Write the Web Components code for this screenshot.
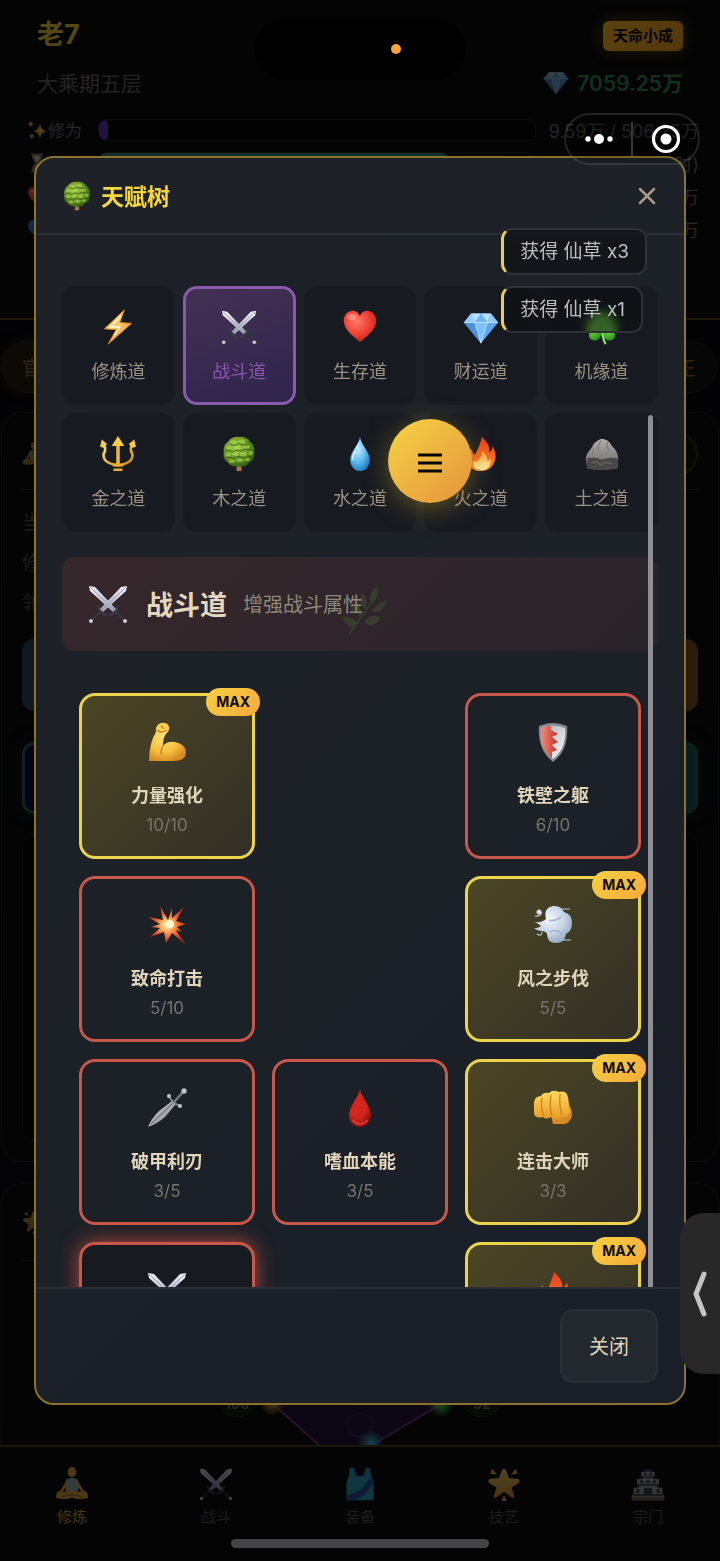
<!DOCTYPE html>
<html lang="zh-CN">
<head>
<meta charset="utf-8">
<meta name="viewport" content="width=device-width, initial-scale=1">
<title>天赋树</title>
<style>
    html, body {
        margin: 0;
        height: 100%;
        background: #040406;
        font-family: Inter, "Noto Sans CJK SC", sans-serif;
        overflow: hidden;
    }
</style>
</head>
<body>
<game-page>
    <game-header slot="header" name="老7" level="大乘期五层" rank="天命小成" coins="7059.25万">
        <stat-row icon="sparkles" label="修为" value="9.59万 / 506.25万" color="#24123f" fill="2"></stat-row>
        <stat-row icon="hourglass" value="时)" color="#12302a" fill="80"></stat-row>
        <stat-row icon="heart" value="万" color="#30100e" fill="100"></stat-row>
        <stat-row icon="blueheart" value="万" color="#0c1c36" fill="100"></stat-row>
    </game-header>
    <home-content></home-content>
    <bottom-nav slot="nav">
        <nav-item icon="lotus" active>修炼</nav-item>
        <nav-item icon="swords">战斗</nav-item>
        <nav-item icon="vest">装备</nav-item>
        <nav-item icon="star">技艺</nav-item>
        <nav-item icon="castle">宗门</nav-item>
    </bottom-nav>
</game-page>

<talent-modal heading="天赋树" icon="tree">
    <path-tabs>
        <path-tile icon="bolt">修炼道</path-tile>
        <path-tile icon="swords" selected>战斗道</path-tile>
        <path-tile icon="heart">生存道</path-tile>
        <path-tile icon="gem">财运道</path-tile>
        <path-tile icon="clover">机缘道</path-tile>
        <path-tile icon="trident">金之道</path-tile>
        <path-tile icon="tree">木之道</path-tile>
        <path-tile icon="drop">水之道</path-tile>
        <path-tile icon="fire">火之道</path-tile>
        <path-tile icon="rock">土之道</path-tile>
    </path-tabs>
    <path-banner icon="swords" heading="战斗道">增强战斗属性</path-banner>
    <talent-grid>
        <talent-card col="1" icon="arm" level="10/10" max>力量强化</talent-card>
        <talent-card col="3" icon="shield" level="6/10">铁壁之躯</talent-card>
        <talent-card col="1" icon="boom" level="5/10">致命打击</talent-card>
        <talent-card col="3" icon="wind" level="5/5" max>风之步伐</talent-card>
        <talent-card col="1" icon="dagger" level="3/5">破甲利刃</talent-card>
        <talent-card col="2" icon="blood" level="3/5">嗜血本能</talent-card>
        <talent-card col="3" icon="fist" level="3/3" max>连击大师</talent-card>
        <talent-card col="1" icon="swords" ready></talent-card>
        <talent-card col="3" icon="fire" max></talent-card>
    </talent-grid>
    <button-secondary slot="footer">关闭</button-secondary>
</talent-modal>

<toast-list>
    <toast-item>获得 仙草 x3</toast-item>
    <toast-item>获得 仙草 x1</toast-item>
</toast-list>
<float-menu></float-menu>
<phone-chrome></phone-chrome>

<script>
/** Icon drawings, all on a 40x40 box */
const grad = (id, a, b, dir = 'x1="0" y1="0" x2="1" y2="1"') =>
    `<linearGradient id="${id}" ${dir}><stop offset="0" stop-color="${a}"/><stop offset="1" stop-color="${b}"/></linearGradient>`;
const radial = (id, a, b, c) =>
    `<radialGradient id="${id}" cx=".4" cy=".35" r=".7"><stop offset="0" stop-color="${a}"/><stop offset=".6" stop-color="${b}"/><stop offset="1" stop-color="${c}"/></radialGradient>`;

const heartPath = 'M20 37C14 31 2 24 2 13C2 6 7 2 12 2C16 2 19 5 20 8C21 5 24 2 28 2C33 2 38 6 38 13C38 24 26 31 20 37Z';
const dropPath = 'M20 1C21 9 31 18 31 27A11 12 0 0 1 9 27C9 18 19 9 20 1Z';
const oneSword = `
    <path d="M26 26L36 36" stroke="#33363d" stroke-width="2.200"/>
    <path d="M21 31Q28 31 30 22" stroke="#3b3e46" stroke-width="2" fill="none"/>
    <path d="M1 2L7 3L28 25L25 28L2 7Z" fill="url(#a)"/>
    <path d="M2 3L26 26" stroke="#858a9c" stroke-width=".8"/>
    <circle cx="37" cy="37" r="2" fill="#c9ccd4"/>`;

const ICONS = {
    bolt: `<defs>${grad('a', '#fff3a8', '#f2931d')}</defs>
        <path d="M27 1L5 22L18 23L9 39L35 16L22 15Z" fill="url(#a)" stroke="#e18a1b" stroke-width="1"/>
        <path d="M23 8L12 20L22 20L16 29" stroke="#fffbe0" stroke-width="1.500" fill="none"/>`,
    swords: `<defs>${grad('a', '#f4f6ff', '#9a9eb0')}</defs>
        ${oneSword}<g transform="matrix(-1 0 0 1 40 0)">${oneSword}</g>`,
    heart: `<defs>${radial('a', '#ff7b6d', '#ee3d30', '#b9201c')}</defs><path d="${heartPath}" fill="url(#a)"/>
        <ellipse cx="11" cy="9" rx="5" ry="3.500" fill="#ffb5a8" opacity=".5"/>`,
    blueheart: `<path d="${heartPath}" fill="#2e77e8"/>`,
    gem: `<path d="M9 5H31L39 15L20 38L1 15Z" fill="#5ba7ee"/>
        <path d="M9 5L13 15L1 15Z M31 5L27 15H39Z" fill="#8fcbfa"/>
        <path d="M9 5H20L13 15Z M31 5H20L27 15Z" fill="#b7e1ff"/>
        <path d="M20 5L27 15H13Z" fill="#6cb5f4"/>
        <path d="M13 15H27L20 38Z" fill="#7fc1f8"/>
        <path d="M1 15H13L20 38Z" fill="#4791dd"/>
        <path d="M1 15H39M13 15L20 38L27 15" stroke="#d6efff" stroke-width=".8" fill="none"/>`,
    clover: `<defs>${radial('a', '#8fe05b', '#4db62f', '#2b8420')}</defs>
        <g fill="url(#a)"><path d="M20 20C6 20 5 3 13 3Q19 2 20 8Q21 2 28 3C35 4 33 20 20 20Z"/>
        <path d="M20 20C13 7 0 13 2 20Q1 25 6 26Q4 34 11 35C18 36 21 27 20 20Z"/>
        <path d="M20 20C27 7 40 13 38 20Q39 25 34 26Q36 34 29 35C22 36 19 27 20 20Z"/></g>
        <path d="M20 20Q20 32 24 39" stroke="#8fe06a" stroke-width="2.500" fill="none"/>`,
    tree: `<defs>${radial('a', '#a6cf48', '#628f25', '#31570f')}</defs>
        <path d="M18 30H22L23 39H17Z" fill="#a8794a"/>
        <path d="M20 1Q28 0 32 6Q38 10 37 18Q38 26 31 30Q27 35 20 34Q12 35 8 30Q2 26 3 18Q2 10 8 6Q12 0 20 1Z" fill="url(#a)"/>
        <g fill="#a9d64c" opacity=".6"><ellipse cx="14" cy="7" rx="4" ry="2.500"/><ellipse cx="23" cy="6" rx="4" ry="2.500"/>
        <ellipse cx="9" cy="13" rx="3.500" ry="2.500"/><ellipse cx="18" cy="13" rx="4" ry="2.500"/><ellipse cx="28" cy="12" rx="4" ry="2.500"/>
        <ellipse cx="8" cy="21" rx="3" ry="2.500"/><ellipse cx="16" cy="20" rx="3.500" ry="2.500"/><ellipse cx="25" cy="20" rx="4" ry="2.500"/>
        <ellipse cx="33" cy="19" rx="2.500" ry="2.500"/><ellipse cx="12" cy="28" rx="3.500" ry="2"/><ellipse cx="21" cy="27" rx="4" ry="2"/><ellipse cx="29" cy="26" rx="3" ry="2"/></g>
        <path d="M5 17Q10 14 13 18Q18 14 22 17Q28 13 34 16M5 24Q10 22 14 25Q20 21 26 25Q30 22 35 23M10 9Q16 12 20 8Q26 12 31 9" stroke="#36590f" stroke-width="1" fill="none"/>`,
    trident: `<defs>${grad('a', '#ffe072', '#c98a1b')}</defs>
        <g stroke="url(#a)" stroke-width="3" fill="none" stroke-linecap="round">
        <path d="M3 8Q8 14 4 20Q3 30 18 32M37 8Q32 14 36 20Q37 30 22 32"/></g>
        <path d="M18 8H22V34H18Z" fill="#e9b640"/>
        <path d="M20 0L27 11H13Z M0 12L2 4L8 9L4 13Z M40 12L38 4L32 9L36 13Z" fill="#f8ca4a"/>
        <path d="M14 31H26V34H14Z M15 36H25V39H15Z" fill="#e7ab36"/>`,
    drop: `<defs>${radial('a', '#c7efff', '#58b6ee', '#1d77c4')}</defs><path d="${dropPath}" fill="url(#a)"/>
        <path d="M15 17Q11 22 12 27" stroke="#fff" stroke-width="2" fill="none" opacity=".7"/>`,
    blood: `<defs>${radial('a', '#d9251e', '#cf261c', '#87100e')}</defs><path d="${dropPath}" fill="url(#a)"/>
        <path d="M12 32Q20 40 28 32" stroke="#ff4c42" stroke-width="1.500" fill="none" opacity=".7"/>`,
    fire: `<defs>${grad('a', '#e93c21', '#ff8a24', 'x1="0" y1="0" x2="0" y2="1"')}${grad('b', '#ff9b2a', '#fff6b0', 'x1="0" y1="0" x2="0" y2="1"')}</defs>
        <path d="M21 1Q31 10 29 18Q33 16 33 11Q38 20 35 29Q31 39 20 39Q7 39 5 27Q4 19 10 14Q10 19 13 21Q18 13 21 1Z" fill="url(#a)"/>
        <path d="M21 16Q28 23 27 28Q30 27 31 25Q31 38 20 38Q10 37 11 28Q15 29 17 27Q21 23 21 16Z" fill="url(#b)"/>`,
    rock: `<defs>${grad('a', '#b0aeaa', '#666563', 'x1="0" y1="0" x2="0" y2="1"')}</defs>
        <path d="M2 26Q2 20 8 14Q11 6 19 3Q27 3 31 11Q38 17 38 26L37 36Q20 39 4 36Z" fill="url(#a)"/>
        <path d="M3 25Q12 23 20 26Q30 23 38 25L37 36Q20 39 4 36Z" fill="#494846"/>
        <path d="M19 5Q15 11 16 17M25 6Q25 12 28 17M11 14L9 20" stroke="#7e7c78" stroke-width="1.500" fill="none"/>
        <path d="M9 30L14 28L18 32L25 29L31 31" stroke="#62605c" stroke-width="2" fill="none"/>`,
    arm: `<defs>${radial('a', '#ffe27a', '#f7c03f', '#d38a22')}</defs>
        <path d="M9 10Q8 3 14 1Q21 0 22 5Q23 9 19 12Q16 15 16 24Q20 19 28 20Q39 22 39 31Q38 39 27 39H2Q2 21 9 10Z" fill="url(#a)"/>
        <path d="M10 8Q14 12 20 8M14 4L17 7M16 24Q13 29 15 33" stroke="#c27d20" stroke-width="1.300" fill="none"/>`,
    shield: `<defs>${grad('a', '#f68a7d', '#be3127', 'x1="0" y1="0" x2="1" y2="0"')}${grad('b', '#aaaeb5', '#fafafa')}</defs>
        <path d="M6 4Q20 -2 34 4Q36 28 20 40Q4 28 6 4Z" fill="#858a91"/>
        <path d="M8 6Q20 1 32 6Q34 26 20 37Q6 26 8 6Z" fill="url(#b)"/>
        <path d="M8 6Q14 4 18 4V8L25 12L19 15L25 20L19 23L24 28L19 30V36Q6 26 8 6Z" fill="url(#a)"/>`,
    boom: `<defs><radialGradient id="a"><stop offset="0" stop-color="#fffce0"/><stop offset=".25" stop-color="#ffc46b"/><stop offset=".6" stop-color="#f06a35"/><stop offset="1" stop-color="#b92c1c"/></radialGradient></defs>
        <path d="M21 15L25 3L25 13L37 2L29 16L39 19L30 22L35 27L29 25L38 39L25 28L19 38L17 27L3 32L13 23L4 22L13 19L1 12L16 15L13 1Z" fill="url(#a)"/>
        <circle cx="23" cy="19" r="4" fill="#fff6cf"/>`,
    wind: `<defs>${radial('a', '#f2f7fe', '#c3d1e2', '#93a6bf')}</defs>
        <path d="M1 17Q8 18 13 14Q10 3 20 1Q28 0 31 7Q39 9 39 18Q39 26 33 29Q32 38 23 38Q14 38 14 29Q13 26 8 26Q4 26 1 23Q6 23 8 21Q5 18 1 17Z" fill="url(#a)"/>
        <path d="M16 15Q22 17 28 12M17 27Q23 23 29 29" stroke="#9fb1c8" stroke-width="1.500" fill="none"/>
        <circle cx="6" cy="7" r="2.500" fill="#d8e2ee"/><path d="M2 11Q7 12 9 7M4 29Q9 32 9 27M27 4H37M29 35H38" stroke="#b9c8d8" stroke-width="1.200" fill="none"/>`,
    dagger: `<defs>${grad('a', '#d2d4d8', '#7d8085')}</defs>
        <path d="M1 39Q4 31 12 23L25 13L29 16L18 29Q10 36 1 39Z" fill="url(#a)"/><path d="M4 36L27 14" stroke="#54575d" stroke-width="1"/>
        <path d="M22 8Q24 14 33 18" stroke="#8b8e93" stroke-width="1.800" fill="none"/>
        <path d="M27 14L36 4" stroke="#777a80" stroke-width="2.600"/>
        <g fill="#bfc2c7"><circle cx="37" cy="3" r="2.700"/><circle cx="22" cy="8" r="2.100"/><circle cx="33" cy="18" r="2.100"/></g>`,
    fist: `<defs>${grad('a', '#ffd95c', '#e79c27', 'x1="0" y1="0" x2="0" y2="1"')}</defs>
        <path d="M30 12Q40 18 39 28Q36 36 31 36H20L18 28Z" fill="#d68a22"/>
        <path d="M1 14Q2 8 8 8Q10 4 16 5Q20 1 26 4Q33 2 35 9L37 24Q35 30 29 29Q23 33 18 29Q13 32 10 29Q3 31 1 26Z" fill="url(#a)"/>
        <path d="M9 10Q7 19 11 28M18 7Q16 19 19 28M27 6Q26 18 29 27" stroke="#cc8420" stroke-width="1.300" fill="none"/>`,
    herb: `<g fill="#4d8a3c"><path d="M31 1Q34 9 27 15Q23 8 31 1Z M39 13Q33 12 27 21Q35 24 39 13Z M34 26Q25 22 21 30Q29 36 34 26Z M19 6Q25 12 22 19Q16 15 19 6Z M9 14Q19 14 19 24Q11 24 9 14Z M3 26Q13 24 15 32Q8 36 3 26Z"/></g>
        <path d="M29 10Q21 23 9 39" stroke="#4d8a3c" stroke-width="1.500" fill="none"/>`,
    lotus: `<g fill="#f5b73c"><ellipse cx="20" cy="6" rx="5" ry="6"/><path d="M13 16Q20 10 27 16L33 27L39 31L35 33L27 24V29Q39 28 39 36Q30 40 20 36Q10 40 1 36Q1 28 13 29V24L5 33L1 31L7 27Z"/></g>
        <path d="M13 15Q20 11 27 15L26 28H14Z" fill="#9fc0c8"/><path d="M8 36Q20 29 32 36" stroke="#a86f20" stroke-width="1.500" fill="none"/>`,
    vest: `<path d="M8 1H13Q14 11 20 11Q26 11 27 1H32Q32 12 36 17V39H4V17Q8 12 8 1Z" fill="#2aa6c6"/><path d="M4 33Q22 31 31 13L36 18Q27 36 12 39H4Z" fill="#2b4fa6"/><path d="M13 1Q14 11 20 11Q26 11 27 1" stroke="#2b4fa6" stroke-width="2" fill="none"/>`,
    star: `<defs>${grad('a', '#ffdd66', '#ea9a25', 'x1="0" y1="0" x2="0" y2="1"')}</defs>
        <path d="M20 2Q22 2 23 5L26 13L37 14Q40 16 37 19L29 24L32 34Q32 37 29 36L20 29L11 36Q8 37 8 34L11 24L3 19Q0 16 3 14L14 13L17 5Q18 2 20 2Z" fill="url(#a)"/>
        <path d="M6 2L12 9L4 8Z M34 2L28 9L36 8Z M20 33L23 40H17Z" fill="#f5b63c"/>`,
    castle: `<path d="M13 6Q20 -1 27 6Z" fill="#40516a"/><path d="M12 6H28V11H26V14H33V20H31V24H37V33H39V39H1V33H3V24H9V20H7V14H14V11H12Z" fill="#a5a7a8"/>
        <path d="M12 12H28M7 21H33M3 33H37" stroke="#45484b" stroke-width="2"/><path d="M15 7H18V10H15ZM22 7H25V10H22ZM11 16H14V19H11ZM18 16H22V19H18ZM26 16H29V19H26ZM6 26H10V31H6ZM30 26H34V31H30ZM15 33V26Q20 23 25 26V33Z" fill="#3a3c40"/><path d="M1 37H39" stroke="#76654b" stroke-width="4"/>`,
    sparkles: `<g fill="#f5c444"><path d="M26 7Q27 20 39 22Q27 24 26 38Q24 24 13 22Q24 20 26 7Z M8 1Q8 7 13 8Q8 9 8 15Q7 9 2 8Q7 7 8 1Z M10 26Q10 31 15 32Q10 33 10 39Q9 33 4 32Q9 31 10 26Z"/></g>`,
    hourglass: `<path d="M8 1H32V5H30Q30 14 23 20Q30 26 30 35H32V39H8V35H10Q10 26 17 20Q10 14 10 5H8Z" fill="#98764f"/><path d="M14 6H26Q26 14 20 18Q14 14 14 6Z M20 23Q25 27 26 34H14Q15 27 20 23Z" fill="#d9d2bd"/>`
};

/** Base class: each element gives its styles and its markup */
class GameElement extends HTMLElement {
    constructor() {
        super();
        this.attachShadow({ mode: 'open' });
    }

    attr(name) {
        return this.getAttribute(name) || '';
    }

    getStyle() { return ''; }
    getTemplate() { return '<slot></slot>'; }

    connectedCallback() {
        const template = document.createElement('template');
        template.innerHTML = `<style>*{box-sizing:border-box} button{font:inherit;cursor:pointer}${this.getStyle()}</style>${this.getTemplate()}`;
        this.shadowRoot.replaceChildren(template.content.cloneNode(true));
    }
}

class GameIcon extends GameElement {
    getStyle() {
        return `:host{display:block;flex:none;width:36px;height:36px} svg{display:block;width:100%;height:100%}`;
    }
    getTemplate() {
        return `<svg viewBox="0 0 40 40" aria-hidden="true">${ICONS[this.attr('name')] || ''}</svg>`;
    }
}

/* ---------- page behind the dialog ---------- */

class GamePage extends GameElement {
    getStyle() {
        return `
            :host{display:flex;flex-direction:column;height:100vh;color:#23221f;background:linear-gradient(180deg,#040406,#020203 50%,#050507)}
            main{flex:1;min-height:0;overflow:hidden}`;
    }
    getTemplate() {
        return `<slot name="header"></slot><main><slot></slot></main><slot name="nav"></slot>`;
    }
}

class GameHeader extends GameElement {
    getStyle() {
        return `
            :host{display:block;padding:13px 21px 73px 27px;border-bottom:2px solid #1e1708;background:#040405}
            .row{display:flex;align-items:center;justify-content:space-between;height:46px;margin:0 16px 0 10px}
            .name{font-size:27px;font-weight:700;line-height:44px;padding-bottom:2px;color:#544714}
            .rank{padding:0 10px;border-radius:6px;background:linear-gradient(135deg,#5a430f,#54360b);font-size:15px;line-height:30px;font-weight:700;color:#050403;box-shadow:0 0 14px #261e08}
            .level{font-size:21px;color:#242321}
            .coins{display:flex;align-items:center;gap:8px;font-size:21px;font-weight:600;color:#123020}
            game-icon{width:26px;height:26px;opacity:.28}
            .stats{margin-top:8px}`;
    }
    getTemplate() {
        return `
            <div class="row"><span class="name">${this.attr('name')}</span><span class="rank">${this.attr('rank')}</span></div>
            <div class="row"><span class="level">${this.attr('level')}</span><span class="coins"><game-icon name="gem"></game-icon>${this.attr('coins')}</span></div>
            <div class="stats"><slot></slot></div>`;
    }
}

class StatRow extends GameElement {
    getStyle() {
        return `
            :host{display:grid;grid-template-columns:71px 1fr 163px;align-items:center;height:33px;font-size:17px;color:#272624}
            .label{display:flex;align-items:center;gap:1px}
            game-icon{width:20px;height:20px;opacity:.3}
            .bar{height:22px;border:1px solid #0c0c0f;border-radius:8px;background:#020203;overflow:hidden}
            .fill{height:100%;border-radius:6px;background:${this.attr('color')};width:${this.attr('fill')}%}
            .value{text-align:right;white-space:nowrap;font-size:18px}`;
    }
    getTemplate() {
        return `<span class="label"><game-icon name="${this.attr('icon')}"></game-icon>${this.attr('label')}</span>
            <div class="bar"><div class="fill"></div></div><span class="value">${this.attr('value')}</span>`;
    }
}

class HomeContent extends GameElement {
    getStyle() {
        return `
            :host{display:flex;flex-direction:column;height:100%;padding:21px 1px 0;box-sizing:border-box;font-size:20px;color:#1d1d1b}
            .tabs{display:flex;justify-content:space-between;margin:0 2px 19px 0}
            .tabs button{height:52px;padding:0 20px;border:1px solid #0d0d0e;border-radius:26px;background:#060606;color:#2c240b}
            .tabs button:first-child{background:#0c0a04;box-shadow:0 0 12px #0e0b03;color:#2c250e}
            .card{border:1px solid #0b0b0d;border-radius:20px;background:#040405;padding:0 20px}
            .head{display:flex;align-items:center;justify-content:space-between;height:77px;margin-bottom:13px;border-bottom:1px solid #0b0b0c}
            .head:has(button){padding-top:6px}
            .head button{width:44px;height:44px;padding:0;border:2px solid #131106;border-radius:22px;background:#060604}
            game-icon{width:24px;height:24px;opacity:.22}
            p{margin:0;line-height:40px}
            .action{display:block;width:100%;height:72px;border:0;border-radius:12px;margin-top:16px;background:linear-gradient(90deg,#0f1824,#2b1b09)}
            .action.glow{margin-top:31px;border:3px solid #0c2020;background:linear-gradient(90deg,#040418,#0a1d20);box-shadow:0 0 16px #050f0e}
            .log{height:305px;margin:21px 0;border:1px solid #0a0a0c;border-radius:10px;background:#020202}
            .card.last{flex:1;min-height:0;margin-top:21px;border-bottom:0;border-radius:20px 20px 0 0;overflow:hidden;display:flex;flex-direction:column;justify-content:space-between}
            .chart{display:block;width:300px;height:60px;margin:0 auto;flex:none}`;
    }
    getTemplate() {
        return `
            <div class="tabs"><button>官</button><button>王</button></div>
            <section class="card">
                <div class="head"><game-icon name="lotus"></game-icon><button aria-label="帮助"></button></div>
                <p>当</p><p>修</p><p>领</p>
                <button class="action" aria-label="修炼"></button>
                <button class="action glow" aria-label="突破"></button>
                <div class="log"></div>
            </section>
            <section class="card last">
                <div class="head"><game-icon name="star"></game-icon></div>
                <svg class="chart" viewBox="0 0 300 60" aria-hidden="true">
                    <defs><radialGradient id="o"><stop offset="0" stop-color="#4a3511"/><stop offset="1" stop-color="#4a351100"/></radialGradient>
                    <radialGradient id="g"><stop offset="0" stop-color="#1c4f18"/><stop offset="1" stop-color="#1c4f1800"/></radialGradient>
                    <radialGradient id="c"><stop offset="0" stop-color="#14404d"/><stop offset="1" stop-color="#14404d00"/></radialGradient></defs>
                    <path d="M63 19L109 60H162L231 19Z" fill="#0d0715"/>
                    <path d="M63 19L109 60M231 19L162 60" stroke="#28132e" stroke-width="2"/>
                    <circle cx="150" cy="40" r="12" fill="none" stroke="#0d1420"/>
                    <circle cx="27" cy="12" r="20" fill="#070906" stroke="#0c0f08"/><circle cx="272" cy="12" r="20" fill="#070906" stroke="#0c0f08"/>
                    <circle cx="62" cy="19" r="12" fill="url(#o)"/><circle cx="231" cy="19" r="13" fill="url(#g)"/><circle cx="161" cy="58" r="13" fill="url(#c)"/>
                    <g fill="#292a26" font-size="14" font-weight="600" text-anchor="middle"><text x="27" y="24">100</text><text x="272" y="24">92</text></g>
                </svg>
            </section>`;
    }
}

class BottomNav extends GameElement {
    getStyle() {
        return `:host{display:grid;grid-template-columns:repeat(5,1fr);height:116px;box-sizing:border-box;padding-top:20px;border-top:2px solid #1b1607;background:#040405}`;
    }
}

class NavItem extends GameElement {
    getStyle() {
        return `
            :host{display:flex;justify-content:center;align-items:flex-start}
            a{display:flex;flex-direction:column;align-items:center;gap:5px;font-size:15px;line-height:22px;color:#1e1d1b;text-decoration:none}
            :host([active]) a{color:#463a0e}
            game-icon{width:34px;height:34px;opacity:.3}`;
    }
    getTemplate() {
        return `<a href="#"><game-icon name="${this.attr('icon')}"></game-icon><slot></slot></a>`;
    }
}

/* ---------- talent dialog ---------- */

class TalentModal extends GameElement {
    getStyle() {
        return `
            :host{position:fixed;inset:0;display:flex;align-items:center;justify-content:center;padding:0 34px}
            .modal{display:flex;flex-direction:column;width:100%;height:80vh;border:2px solid #8c722b;border-radius:20px;overflow:hidden;background:linear-gradient(135deg,#1e2228,#1c2027 60%,#1a1e29)}
            header{display:flex;align-items:center;gap:9px;height:77px;padding:0 26px;border-bottom:2px solid #2b2f36}
            h2{flex:1;margin:0;padding-bottom:2px;font-size:23px;font-weight:700;color:#f6d63f}
            header game-icon{width:30px;height:30px}
            header button{display:flex;padding:2px;border:0;background:none;color:#a89c88}
            header svg{width:18px;height:18px}
            .body{flex:1;min-height:0;position:relative}
            .scroll{height:100%;padding:51px 26px 0;overflow-y:auto;scrollbar-width:none}
            .thumb{position:absolute;top:180px;bottom:0;right:31px;width:5px;border-radius:3px 3px 0 0;background:#8e8e94}
            footer{display:flex;justify-content:flex-end;padding:20px 26px;border-top:2px solid #2b2f36}`;
    }
    getTemplate() {
        return `
            <div class="modal" role="dialog" aria-label="${this.attr('heading')}">
                <header>
                    <game-icon name="${this.attr('icon')}"></game-icon>
                    <h2>${this.attr('heading')}</h2>
                    <button aria-label="关闭"><svg viewBox="0 0 18 18"><path d="M2 2L16 16M16 2L2 16" stroke="currentColor" stroke-width="2.500" stroke-linecap="round"/></svg></button>
                </header>
                <div class="body"><div class="scroll"><slot></slot></div><div class="thumb"></div></div>
                <footer><slot name="footer"></slot></footer>
            </div>`;
    }
}

class PathTabs extends GameElement {
    getStyle() {
        return `:host{display:grid;grid-template-columns:repeat(5,1fr);gap:8px}`;
    }
}

class PathTile extends GameElement {
    getStyle() {
        return `
            :host{display:block}
            button{display:flex;flex-direction:column;align-items:center;gap:13px;width:100%;height:119px;padding:20px 0 0;border:3px solid #181b22;border-radius:14px;background:#171a21;font-size:18px;line-height:28px;color:#9b9180}
            :host([selected]) button{border-color:#8a5aac;background:linear-gradient(160deg,#433153,#2f244d);color:#8b55ad}`;
    }
    getTemplate() {
        return `<button><game-icon name="${this.attr('icon')}"></game-icon><slot></slot></button>`;
    }
}

class PathBanner extends GameElement {
    getStyle() {
        return `
            :host{display:flex;align-items:center;position:relative;height:94px;margin-top:25px;padding:0 26px;border-radius:12px;background:linear-gradient(135deg,#36272b,#29242a);box-sizing:border-box}
            game-icon{width:40px;height:40px}
            h3{margin:0 16px 0 18px;padding-bottom:2px;font-size:27px;font-weight:600;color:#e3d7bd}
            span{padding-bottom:2px;font-size:20px;color:#8f887b}
            .leaf{position:absolute;left:276px;top:28px;width:50px;height:50px;opacity:.24}`;
    }
    getTemplate() {
        return `<game-icon name="${this.attr('icon')}"></game-icon><h3>${this.attr('heading')}</h3><span><slot></slot></span><game-icon class="leaf" name="herb"></game-icon>`;
    }
}

class TalentGrid extends GameElement {
    getStyle() {
        return `
            :host{display:grid;grid-template-columns:repeat(3,1fr);gap:17px;padding:42px 17px 26px}
            ::slotted([col="1"]){grid-column:1}
            ::slotted([col="2"]){grid-column:2}
            ::slotted([col="3"]){grid-column:3}`;
    }
}

class TalentCard extends GameElement {
    getStyle() {
        return `
            :host{display:block;position:relative}
            button{display:flex;flex-direction:column;align-items:center;width:100%;height:166px;padding:26px 0 0;border:3px solid #c9584a;border-radius:16px;background:none;color:#e0d5bb}
            :host([max]) button{border-color:#ebd44b;background:linear-gradient(135deg,#4b4624,#332f27)}
            :host([ready]) button{background:#171a21;box-shadow:0 0 20px #b24a3d}
            game-icon{width:40px;height:40px}
            .name{margin-top:21px;font-size:18px;line-height:26px;font-weight:600}
            .level{margin-top:5px;font-size:17px;line-height:22px;color:#77746c}
            .max{position:absolute;top:-5px;right:-5px;padding:0 10px;border-radius:14px;background:linear-gradient(135deg,#f6d044,#f5a93a);font-size:14px;line-height:28px;font-weight:700;color:#0c0b08}`;
    }
    getTemplate() {
        return `<button><game-icon name="${this.attr('icon')}"></game-icon><span class="name"><slot></slot></span><span class="level">${this.attr('level')}</span></button>
            ${this.hasAttribute('max') ? '<span class="max">MAX</span>' : ''}`;
    }
}

class ButtonSecondary extends GameElement {
    getStyle() {
        return `:host{display:block} button{height:74px;padding:0 27px;border:2px solid #2b2f36;border-radius:14px;background:#23272e;font-size:20px;color:#dfd4bb}`;
    }
    getTemplate() {
        return `<button><slot></slot></button>`;
    }
}

/* ---------- things that float over the page ---------- */

class ToastList extends GameElement {
    getStyle() {
        return `:host{position:fixed;top:228px;right:73px;display:flex;flex-direction:column;align-items:flex-start;gap:11px}`;
    }
}

class ToastItem extends GameElement {
    getStyle() {
        return `:host{display:block;padding:0 16px;border:2px solid #2e3137;border-left:3px solid #ecd148;border-radius:11px;background:#0a0d1188;backdrop-filter:blur(4px);font-size:19px;line-height:43px;color:#bdbdbd}`;
    }
}

class FloatMenu extends GameElement {
    getStyle() {
        return `
            :host{position:fixed;top:419px;right:248px}
            button{display:flex;align-items:center;justify-content:center;width:84px;height:84px;padding:4px 0 0;border:0;border-radius:42px;background:linear-gradient(135deg,#f5d445,#e5933c);box-shadow:0 5px 26px #a3871f88}
            svg{width:24px;height:20px}`;
    }
    getTemplate() {
        return `<button aria-label="菜单"><svg viewBox="0 0 24 20"><path d="M0 2H24M0 10H24M0 18H24" stroke="#080705" stroke-width="3"/></svg></button>`;
    }
}

class PhoneChrome extends GameElement {
    getStyle() {
        return `
            .island{position:fixed;top:18px;left:calc(50% - 105px);width:210px;height:62px;border-radius:31px;background:#000;display:flex;align-items:center;justify-content:flex-end;padding-right:64px}
            .island i{width:10px;height:10px;border-radius:5px;background:#f7a13f}
            .capsule{position:fixed;top:113px;right:20px;width:136px;height:52px;display:grid;grid-template-columns:1fr 2px 1fr;align-items:center;border:2px solid #8888883d;border-radius:26px;background:#00000022}
            .capsule button{display:flex;justify-content:center;padding:0;border:0;background:none}
            .capsule hr{width:2px;height:34px;margin:0;border:0;background:#3a3a3b}
            .capsule svg{width:32px;height:32px}
            .drawer{position:fixed;top:1213px;right:0;width:40px;height:161px;padding:0;border:0;border-radius:24px 0 0 24px;background:#282828}
            .drawer svg{display:block;width:18px;height:46px;margin:0 0 0 11px}
            .home{position:fixed;bottom:13px;left:calc(50% - 129px);width:258px;height:9px;border-radius:5px;background:#444446}`;
    }
    getTemplate() {
        return `
            <div class="island"><i></i></div>
            <div class="capsule">
                <button aria-label="更多"><svg viewBox="0 0 32 32" fill="#fff"><circle cx="5" cy="16" r="2.700"/><circle cx="16" cy="16" r="5"/><circle cx="27" cy="16" r="2.700"/></svg></button>
                <hr>
                <button aria-label="退出"><svg viewBox="0 0 32 32"><circle cx="16" cy="16" r="12.500" fill="none" stroke="#fff" stroke-width="3.200"/><circle cx="16" cy="16" r="5.500" fill="#fff"/></svg></button>
            </div>
            <button class="drawer" aria-label="展开"><svg viewBox="0 0 18 46"><path d="M13 3L5 23L13 43" fill="none" stroke="#c4c4c6" stroke-width="5" stroke-linecap="round" stroke-linejoin="round"/></svg></button>
            <div class="home"></div>`;
    }
}

customElements.define('game-icon', GameIcon);
customElements.define('game-page', GamePage);
customElements.define('game-header', GameHeader);
customElements.define('stat-row', StatRow);
customElements.define('home-content', HomeContent);
customElements.define('bottom-nav', BottomNav);
customElements.define('nav-item', NavItem);
customElements.define('talent-modal', TalentModal);
customElements.define('path-tabs', PathTabs);
customElements.define('path-tile', PathTile);
customElements.define('path-banner', PathBanner);
customElements.define('talent-grid', TalentGrid);
customElements.define('talent-card', TalentCard);
customElements.define('button-secondary', ButtonSecondary);
customElements.define('toast-list', ToastList);
customElements.define('toast-item', ToastItem);
customElements.define('float-menu', FloatMenu);
customElements.define('phone-chrome', PhoneChrome);
</script>
</body>
</html>
